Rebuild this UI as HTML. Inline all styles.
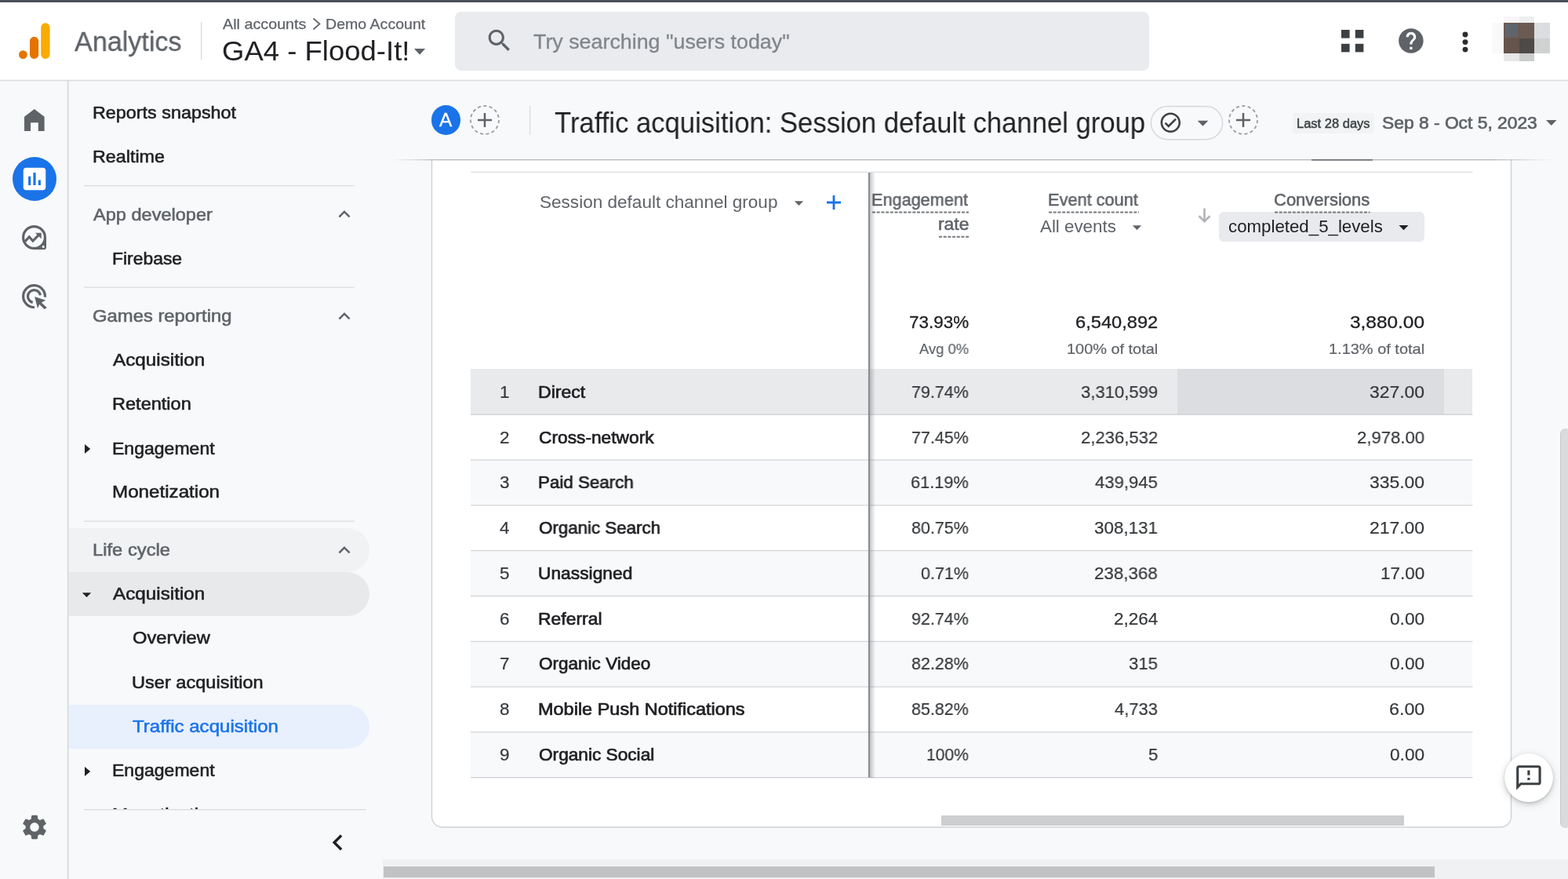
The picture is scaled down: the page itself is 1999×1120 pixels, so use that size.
<!DOCTYPE html>
<html lang="en">
<head>
<meta charset="utf-8">
<title>Analytics | Traffic acquisition: Session default channel group</title>
<meta name="viewport" content="width=1999">
<style>
*{box-sizing:border-box;margin:0;padding:0}
html,body{width:1999px;height:1120px;overflow:hidden;background:#f8f9fa}
body{position:relative;font-family:"Liberation Sans",sans-serif;color:#202124;-webkit-font-smoothing:antialiased}
.t{position:absolute;white-space:nowrap;transform-origin:0 0;display:block;will-change:transform}
.i{position:absolute;display:block;overflow:visible}
.b{position:absolute;display:block}
header,nav,main,section,aside,footer{position:absolute;display:block}
ul,li{list-style:none}
a{color:inherit;text-decoration:none}
h1{font-weight:400;font-size:inherit}
.g{position:absolute;left:0;top:0}
table{border-collapse:collapse}

</style>
</head>
<body>
<header style="left:0;top:0">
<div class="b" style="left:0.00px;top:0.00px;width:1999.00px;height:103.00px;background:#fff"></div>
<svg class="i" style="left:0.00px;top:100px" width="1999.00" height="4" viewBox="0 0 1999.00 4"><line x1="0" x2="1999.00" y1="2.40" y2="2.40" stroke="#d9dbdf" stroke-width="1.50" /></svg>
<div class="b" style="left:0.00px;top:0.00px;width:1999.00px;height:2.50px;background:#4a5058"></div>
<svg class="i" style="left:20.00px;top:26.00px" width="50.00" height="52.00" viewBox="0 0 50 52" ><rect x="32.2" y="3.3" width="11.4" height="45.7" rx="5.7" fill="#f9ab00"/><rect x="18" y="20.8" width="11.2" height="28.2" rx="5.6" fill="#e37400"/><circle cx="9.4" cy="43.6" r="5.4" fill="#e37400"/></svg>
<span class="t" style="left:95.00px;top:35px;font-size:35.5px;line-height:36px;color:#5f6368;transform:scaleX(0.9610);-webkit-text-stroke:0.35px #5f6368;">Analytics</span>
<svg class="i" style="left:254px;top:28.00px" width="4" height="48.50" viewBox="0 0 4 48.50"><line y1="0" y2="48.50" x1="2.70" x2="2.70" stroke="#dadce0" stroke-width="1.40"/></svg>
<span class="t" style="left:284.00px;top:21px;font-size:19.0px;line-height:19px;color:#5f6368;transform:scaleX(1.0393);-webkit-text-stroke:0.25px #5f6368;">All accounts</span>
<svg class="i" style="left:396.00px;top:21.00px" width="15.00" height="19.00" viewBox="0 0 15 19" ><path d="M3.5 2.5l8 7-8 7" fill="none" stroke="#5f6368" stroke-width="1.7"/></svg>
<span class="t" style="left:415.00px;top:21px;font-size:19.0px;line-height:19px;color:#5f6368;transform:scaleX(1.0299);-webkit-text-stroke:0.25px #5f6368;">Demo Account</span>
<span class="t" role="button" style="left:283.00px;top:47px;font-size:35.5px;line-height:36px;color:#202124;transform:scaleX(1.0286);">GA4 - Flood-It!</span>
<svg class="i" style="left:527.80px;top:62.00px" width="14.20" height="7.80" viewBox="0 0 14.2 7.8" ><path d="M0 0h14.2L7.1 7.8z" fill="#5f6368"/></svg>
<div class="b" style="left:580.00px;top:15.00px;width:885.00px;height:74.50px;background:#e9ebee;border-radius:8px"></div>
<svg class="i" style="left:617.60px;top:33.40px" width="37.40" height="37.40" viewBox="0 0 24 24" fill="#5f6368" ><path d="M15.5 14h-.79l-.28-.27C15.41 12.59 16 11.11 16 9.5 16 5.91 13.09 3 9.5 3S3 5.91 3 9.5 5.91 16 9.5 16c1.61 0 3.09-.59 4.23-1.57l.27.28v.79l5 4.99L20.49 19l-4.99-5zm-6 0C7.01 14 5 11.99 5 9.5S7.01 5 9.5 5 14 7.01 14 9.5 11.99 14 9.5 14z"/></svg>
<span class="t" style="left:680.00px;top:40px;font-size:26.0px;line-height:26px;color:#80868b;transform:scaleX(1.0318);-webkit-text-stroke:0.30px #80868b;">Try searching "users today"</span>
<svg class="i" style="left:1709.90px;top:38.10px" width="28.70" height="28.70" viewBox="0 0 28.7 28.7" ><rect x="0" y="0" width="10.6" height="10.6" fill="#3c4043"/><rect x="0" y="17.8" width="10.6" height="10.6" fill="#3c4043"/><rect x="17.8" y="0" width="10.6" height="10.6" fill="#3c4043"/><rect x="17.8" y="17.8" width="10.6" height="10.6" fill="#3c4043"/></svg>
<svg class="i" style="left:1780.10px;top:33.10px" width="37.80" height="37.80" viewBox="0 0 24 24" fill="#5f6368" ><path d="M12 2C6.48 2 2 6.48 2 12s4.48 10 10 10 10-4.48 10-10S17.52 2 12 2zm1 17h-2v-2h2v2zm2.07-7.75l-.9.92C13.45 12.9 13 13.5 13 15h-2v-.5c0-1.1.45-2.1 1.17-2.83l1.24-1.26c.37-.36.59-.86.59-1.41 0-1.1-.9-2-2-2s-2 .9-2 2H8c0-2.21 1.79-4 4-4s4 1.79 4 4c0 .88-.36 1.68-.93 2.25z"/></svg>
<svg class="i" style="left:1863.60px;top:40.30px" width="8.00" height="27.00" viewBox="0 0 8 27" fill="#2a2c30"><circle cx="4" cy="4" r="3.45"/><circle cx="4" cy="13.6" r="3.45"/><circle cx="4" cy="23.1" r="3.45"/></svg>
<div class="b" style="left:1902.00px;top:29.00px;width:15.00px;height:38.50px;background:#f9f9fa"></div>
<div class="b" style="left:1917.00px;top:21.00px;width:19.50px;height:8.00px;background:#f7f7f8"></div>
<div class="b" style="left:1936.50px;top:21.00px;width:19.50px;height:8.00px;background:#eeeeef"></div>
<div class="b" style="left:1917.00px;top:67.50px;width:19.50px;height:10.50px;background:#e7e7e8"></div>
<div class="b" style="left:1936.50px;top:67.50px;width:19.50px;height:10.50px;background:#cbcccc"></div>
<div class="b" style="left:1956.00px;top:29.00px;width:19.50px;height:19.50px;background:#dcdde0"></div>
<div class="b" style="left:1956.00px;top:48.50px;width:19.50px;height:19.00px;background:#d0d1d1"></div>
<div class="b" style="left:1917.00px;top:29.00px;width:19.50px;height:19.50px;background:#6a5a52"></div>
<div class="b" style="left:1918.50px;top:30.50px;width:16.50px;height:16.50px;background:#5f656c"></div>
<div class="b" style="left:1936.50px;top:29.00px;width:19.50px;height:19.50px;background:#6a5a52"></div>
<div class="b" style="left:1917.00px;top:48.50px;width:19.50px;height:19.00px;background:#64544c"></div>
<div class="b" style="left:1936.50px;top:48.50px;width:19.50px;height:19.00px;background:#4d4a47"></div>
</header>
<nav aria-label="Main" style="left:0;top:0">
<svg class="i" style="left:84px;top:103.00px" width="4" height="1017.00" viewBox="0 0 4 1017.00"><line y1="0" y2="1017.00" x1="2.70" x2="2.70" stroke="#d3d5d9" stroke-width="1.60"/></svg>
<svg class="i" style="left:31.00px;top:139.00px" width="25.60" height="28.00" viewBox="0 0 25.6 28" ><path d="M12.8 0L25.6 9.8V28H17.8V17.2H8V28H0V9.8z" fill="#5f6368"/></svg>
<div class="b" style="left:15.70px;top:200.00px;width:56.00px;height:56.00px;background:#1a73e8;border-radius:50%"></div>
<svg class="i" style="left:24.70px;top:209.00px" width="38.00" height="38.00" viewBox="0 0 24 24" fill="#fff" ><path d="M19 3H5c-1.1 0-2 .9-2 2v14c0 1.1.9 2 2 2h14c1.1 0 2-.9 2-2V5c0-1.1-.9-2-2-2zM9 17H7v-7h2v7zm4 0h-2V7h2v10zm4 0h-2v-4h2v4z"/></svg>
<svg class="i" style="left:28.35px;top:287.30px" width="31.00" height="31.00" viewBox="0 0 31 31" ><path fill-rule="evenodd" fill="#5f6368" d="M15.5 0A15.5 15.5 0 1 0 15.5 31H28.6a2.4 2.4 0 0 0 2.4-2.4V15.5A15.5 15.5 0 0 0 15.5 0zM15.5 3.2a12.3 12.3 0 1 1 0 24.6a12.3 12.3 0 1 1 0-24.6zM27.2 25.7a1.6 1.6 0 1 1 0 3.2a1.6 1.6 0 1 1 0-3.2z"/><path d="M3.9 20.6l5.4-5.8 4.6 5.2 7-7.2" fill="none" stroke="#5f6368" stroke-width="3.1"/><path d="M17 9.8h7.7v7.5z" fill="#5f6368"/></svg>
<svg class="i" style="left:28.35px;top:362.00px" width="33.00" height="33.00" viewBox="0 0 33 33" ><path d="M15.99 29.49A13.9 13.9 0 1 1 29.37 16.57" fill="none" stroke="#5f6368" stroke-width="3.2"/><path d="M13.70 23.39A8 8 0 1 1 23.38 14.21" fill="none" stroke="#5f6368" stroke-width="3.2"/><path d="M16.1 16.1l14.1 4.3-5.4 3.2 7 6.5-3.2 1.8-6.4-6.1-2.2 4.9z" fill="#5f6368"/></svg>
<svg class="i" style="left:24.70px;top:1035.20px" width="38.00" height="38.00" viewBox="0 0 24 24" fill="#5f6368" ><path d="M19.14 12.94c.04-.3.06-.61.06-.94 0-.32-.02-.64-.07-.94l2.03-1.58c.18-.14.23-.41.12-.61l-1.92-3.32c-.12-.22-.37-.29-.59-.22l-2.39.96c-.5-.38-1.03-.7-1.62-.94l-.36-2.54c-.04-.24-.24-.41-.48-.41h-3.84c-.24 0-.43.17-.47.41l-.36 2.54c-.59.24-1.13.57-1.62.94l-2.39-.96c-.22-.08-.47 0-.59.22L2.74 8.87c-.12.21-.08.47.12.61l2.03 1.58c-.05.3-.09.63-.09.94s.02.64.07.94l-2.03 1.58c-.18.14-.23.41-.12.61l1.92 3.32c.12.22.37.29.59.22l2.39-.96c.5.38 1.03.7 1.62.94l.36 2.54c.05.24.24.41.48.41h3.84c.24 0 .44-.17.47-.41l.36-2.54c.59-.24 1.13-.56 1.62-.94l2.39.96c.22.08.47 0 .59-.22l1.92-3.32c.12-.22.07-.47-.12-.61l-2.01-1.58zM12 15.6c-1.98 0-3.6-1.62-3.6-3.6s1.62-3.6 3.6-3.6 3.6 1.62 3.6 3.6-1.62 3.6-3.6 3.6z"/></svg>
</nav>
<nav aria-label="Reports" style="left:0;top:0">
<div class="b" style="left:87.50px;top:673.20px;width:383.50px;height:56.00px;background:#f1f2f4;border-radius:0 28px 28px 0"></div>
<div class="b" style="left:87.50px;top:729.30px;width:383.50px;height:56.00px;background:#e8e9eb;border-radius:0 28px 28px 0"></div>
<div class="b" style="left:87.50px;top:898.00px;width:383.50px;height:56.00px;background:#e8f0fe;border-radius:0 28px 28px 0"></div>
<a class="t" href="#" style="left:118.00px;top:133px;font-size:21.5px;line-height:22px;color:#202124;transform:scaleX(1.0862);-webkit-text-stroke:0.55px #202124;">Reports snapshot</a>
<a class="t" href="#" style="left:118.00px;top:189px;font-size:21.5px;line-height:22px;color:#202124;transform:scaleX(1.0840);-webkit-text-stroke:0.55px #202124;">Realtime</a>
<svg class="i" style="left:107.00px;top:234px" width="345.00" height="4" viewBox="0 0 345.00 4"><line x1="0" x2="345.00" y1="2.60" y2="2.60" stroke="#dadcdf" stroke-width="1.40" /></svg>
<span class="t" role="button" aria-expanded="true" style="left:119.00px;top:263px;font-size:21.5px;line-height:22px;color:#5f6368;transform:scaleX(1.0956);-webkit-text-stroke:0.55px #5f6368;">App developer</span>
<svg class="i" style="left:423.70px;top:258.00px" width="30.00" height="30.00" viewBox="0 0 24 24" fill="#5f6368" ><path d="M12 8l-6 6 1.41 1.41L12 10.83l4.59 4.58L18 14z"/></svg>
<a class="t" href="#" style="left:143.00px;top:319px;font-size:21.5px;line-height:22px;color:#202124;transform:scaleX(1.0650);-webkit-text-stroke:0.55px #202124;">Firebase</a>
<svg class="i" style="left:107.00px;top:364px" width="345.00" height="4" viewBox="0 0 345.00 4"><line x1="0" x2="345.00" y1="2.10" y2="2.10" stroke="#dadcdf" stroke-width="1.40" /></svg>
<span class="t" role="button" aria-expanded="true" style="left:118.00px;top:392px;font-size:21.5px;line-height:22px;color:#5f6368;transform:scaleX(1.1081);-webkit-text-stroke:0.55px #5f6368;">Games reporting</span>
<svg class="i" style="left:423.70px;top:387.50px" width="30.00" height="30.00" viewBox="0 0 24 24" fill="#5f6368" ><path d="M12 8l-6 6 1.41 1.41L12 10.83l4.59 4.58L18 14z"/></svg>
<a class="t" href="#" style="left:144.00px;top:448px;font-size:21.5px;line-height:22px;color:#202124;transform:scaleX(1.1288);-webkit-text-stroke:0.55px #202124;">Acquisition</a>
<a class="t" href="#" style="left:143.00px;top:504px;font-size:21.5px;line-height:22px;color:#202124;transform:scaleX(1.0947);-webkit-text-stroke:0.55px #202124;">Retention</a>
<svg class="i" style="left:107.60px;top:565.60px" width="7.20" height="12.00" viewBox="0 0 7.2 12" ><path d="M0 0l7.2 6L0 12z" fill="#202124"/></svg>
<a class="t" href="#" style="left:143.00px;top:561px;font-size:21.5px;line-height:22px;color:#202124;transform:scaleX(1.0712);-webkit-text-stroke:0.55px #202124;">Engagement</a>
<a class="t" href="#" style="left:143.00px;top:616px;font-size:21.5px;line-height:22px;color:#202124;transform:scaleX(1.1243);-webkit-text-stroke:0.55px #202124;">Monetization</a>
<svg class="i" style="left:107.00px;top:662px" width="345.00" height="4" viewBox="0 0 345.00 4"><line x1="0" x2="345.00" y1="2.10" y2="2.10" stroke="#dadcdf" stroke-width="1.40" /></svg>
<span class="t" role="button" aria-expanded="true" style="left:118.00px;top:690px;font-size:21.5px;line-height:22px;color:#5f6368;transform:scaleX(1.1044);-webkit-text-stroke:0.55px #5f6368;">Life cycle</span>
<svg class="i" style="left:423.70px;top:685.80px" width="30.00" height="30.00" viewBox="0 0 24 24" fill="#5f6368" ><path d="M12 8l-6 6 1.41 1.41L12 10.83l4.59 4.58L18 14z"/></svg>
<svg class="i" style="left:97.30px;top:744.20px" width="27.00" height="27.00" viewBox="0 0 24 24" fill="#202124" ><path d="M7 10l5 5 5-5z"/></svg>
<a class="t" href="#" style="left:144.00px;top:746px;font-size:21.5px;line-height:22px;color:#202124;transform:scaleX(1.1288);-webkit-text-stroke:0.55px #202124;">Acquisition</a>
<a class="t" href="#" style="left:169.00px;top:802px;font-size:21.5px;line-height:22px;color:#202124;transform:scaleX(1.1040);-webkit-text-stroke:0.55px #202124;">Overview</a>
<a class="t" href="#" style="left:168.00px;top:859px;font-size:21.5px;line-height:22px;color:#202124;transform:scaleX(1.0962);-webkit-text-stroke:0.55px #202124;">User acquisition</a>
<a class="t" href="#" aria-current="page" style="left:169.00px;top:915px;font-size:21.5px;line-height:22px;color:#1a73e8;transform:scaleX(1.1195);-webkit-text-stroke:0.55px #1a73e8;">Traffic acquisition</a>
<svg class="i" style="left:107.60px;top:976.60px" width="7.20" height="12.00" viewBox="0 0 7.2 12" ><path d="M0 0l7.2 6L0 12z" fill="#202124"/></svg>
<a class="t" href="#" style="left:143.00px;top:971px;font-size:21.5px;line-height:22px;color:#202124;transform:scaleX(1.0712);-webkit-text-stroke:0.55px #202124;">Engagement</a>
<div class="b" style="left:88px;top:1000px;width:390px;height:31px;overflow:hidden"><a class="t" href="#" style="left:55.00px;top:27px;font-size:21.5px;line-height:22px;color:#202124;transform:scaleX(1.1243);-webkit-text-stroke:0.55px #202124;">Monetization</a></div>
<svg class="i" style="left:107.00px;top:1029px" width="360.00" height="4" viewBox="0 0 360.00 4"><line x1="0" x2="360.00" y1="2.60" y2="2.60" stroke="#dadcdf" stroke-width="1.40" /></svg>
<svg class="i" style="left:410.00px;top:1053.10px" width="41.00" height="41.00" viewBox="0 0 24 24" fill="#202124" ><path d="M15.41 7.41L14 6l-6 6 6 6 1.41-1.41L10.83 12z"/></svg>
</nav>
<section aria-label="Report header" style="left:0;top:0">
<div class="b" style="left:550.00px;top:134.00px;width:37.00px;height:37.50px;background:#1a73e8;border-radius:50%"></div>
<span class="t" style="left:560.00px;top:141px;font-size:23.5px;line-height:24px;color:#fff;transform:scaleX(1.0391);-webkit-text-stroke:0.30px #fff;">A</span>
<svg class="i" style="left:599.30px;top:134.00px" width="38.00" height="38.00" viewBox="0 0 38 38" ><circle cx="19" cy="19" r="18" fill="none" stroke="#9aa0a6" stroke-width="1.8" stroke-dasharray="4.2 3.3"/><path d="M19 10v18M10 19h18" stroke="#5f6368" stroke-width="2.5" fill="none"/></svg>
<svg class="i" style="left:673px;top:135.00px" width="4" height="37.00" viewBox="0 0 4 37.00"><line y1="0" y2="37.00" x1="2.60" x2="2.60" stroke="#dadce0" stroke-width="1.40"/></svg>
<h1 class="t" style="left:707.00px;top:139px;font-size:36.5px;line-height:36px;color:#202124;transform:scaleX(0.9493);">Traffic acquisition: Session default channel group</h1>
<svg class="i" style="left:1466.00px;top:133.50px" width="94.00" height="45.00" viewBox="0 0 94 45" ><rect x="1.4" y="1.5" width="91.2" height="42.2" rx="21.1" fill="none" stroke="#d6d8dc" stroke-width="1.5"/></svg>
<svg class="i" style="left:1477.40px;top:141.00px" width="30.60" height="30.60" viewBox="0 0 24 24" fill="#3c4043" ><path d="M12 2C6.48 2 2 6.48 2 12s4.48 10 10 10 10-4.48 10-10S17.52 2 12 2zm0 18c-4.41 0-8-3.59-8-8s3.59-8 8-8 8 3.59 8 8-3.59 8-8 8zm4.59-12.42L10 14.17l-2.59-2.58L6 13l4 4 8-8z"/></svg>
<svg class="i" style="left:1516.90px;top:139.50px" width="33.00" height="33.00" viewBox="0 0 24 24" fill="#5f6368" ><path d="M7 10l5 5 5-5z"/></svg>
<svg class="i" style="left:1566.00px;top:134.00px" width="38.00" height="38.00" viewBox="0 0 38 38" ><circle cx="19" cy="19" r="18" fill="none" stroke="#9aa0a6" stroke-width="1.8" stroke-dasharray="4.2 3.3"/><path d="M19 10v18M10 19h18" stroke="#5f6368" stroke-width="2.5" fill="none"/></svg>
<div class="b" style="left:1647.70px;top:144.00px;width:104.60px;height:25.50px;background:#f1f3f4;border-radius:3px"></div>
<span class="t" style="left:1653.00px;top:150px;font-size:16.0px;line-height:16px;color:#3c4043;transform:scaleX(1.0320);-webkit-text-stroke:0.45px #3c4043;">Last 28 days</span>
<span class="t" style="left:1762.00px;top:146px;font-size:22.0px;line-height:22px;color:#5f6368;transform:scaleX(1.0368);-webkit-text-stroke:0.70px #5f6368;">Sep 8 - Oct 5, 2023</span>
<svg class="i" style="left:1971.00px;top:152.50px" width="13.50" height="7.00" viewBox="0 0 13.5 7" ><path d="M0 0h13.5L6.75 7z" fill="#5f6368"/></svg>
</section>
<main style="left:0;top:0" role="table" aria-label="Traffic acquisition">
<div class="b" style="left:550.00px;top:203.00px;width:1377.00px;height:852.00px;background:#fff;border-radius:0 0 14px 14px"></div>
<svg class="i" style="left:548.00px;top:203.00px" width="1381.00" height="854.00" viewBox="0 0 1381 854" ><path d="M2.5 0V837.5a13.5 13.5 0 0 0 13.5 13.5H1365a13.5 13.5 0 0 0 13.5-13.5V0" fill="none" stroke="#cfd1d5" stroke-width="1.4"/></svg>
<div class="b" style="left:500.00px;top:203.00px;width:1480.00px;height:1.00px;background:linear-gradient(90deg,rgba(128,134,139,0) 0,rgba(128,134,139,.6) 60px,rgba(128,134,139,.6) 1400px,rgba(128,134,139,0) 100%)"></div>
<div class="b" style="left:500.00px;top:204.00px;width:1480.00px;height:1.00px;background:linear-gradient(90deg,rgba(128,134,139,0) 0,rgba(128,134,139,.18) 60px,rgba(128,134,139,.18) 1400px,rgba(128,134,139,0) 100%)"></div>
<svg class="i" style="left:1672.00px;top:201px" width="78.00" height="4" viewBox="0 0 78.00 4"><line x1="0" x2="78.00" y1="2.80" y2="2.80" stroke="#5f6368" stroke-width="1.60" /></svg>
<div class="b" style="left:599.50px;top:470.44px;width:1277.50px;height:57.81px;background:#e9eaec"></div>
<div class="b" style="left:1500.70px;top:470.44px;width:340.00px;height:57.81px;background:#dcdde0"></div>
<div class="b" style="left:599.50px;top:586.06px;width:1277.50px;height:57.81px;background:#f8f9fa"></div>
<div class="b" style="left:599.50px;top:701.68px;width:1277.50px;height:57.81px;background:#f8f9fa"></div>
<div class="b" style="left:599.50px;top:817.30px;width:1277.50px;height:57.81px;background:#f8f9fa"></div>
<div class="b" style="left:599.50px;top:932.92px;width:1277.50px;height:57.81px;background:#f8f9fa"></div>
<svg class="i" style="left:599.50px;top:217px" width="1277.50" height="4" viewBox="0 0 1277.50 4"><line x1="0" x2="1277.50" y1="2.40" y2="2.40" stroke="#dcdee1" stroke-width="1.40" /></svg>
<svg class="i" style="left:599.50px;top:526px" width="1277.50" height="4" viewBox="0 0 1277.50 4"><line x1="0" x2="1277.50" y1="2.25" y2="2.25" stroke="#d3d5d9" stroke-width="1.30" /></svg>
<svg class="i" style="left:599.50px;top:584px" width="1277.50" height="4" viewBox="0 0 1277.50 4"><line x1="0" x2="1277.50" y1="2.06" y2="2.06" stroke="#d3d5d9" stroke-width="1.30" /></svg>
<svg class="i" style="left:599.50px;top:641px" width="1277.50" height="4" viewBox="0 0 1277.50 4"><line x1="0" x2="1277.50" y1="2.87" y2="2.87" stroke="#d3d5d9" stroke-width="1.30" /></svg>
<svg class="i" style="left:599.50px;top:699px" width="1277.50" height="4" viewBox="0 0 1277.50 4"><line x1="0" x2="1277.50" y1="2.68" y2="2.68" stroke="#d3d5d9" stroke-width="1.30" /></svg>
<svg class="i" style="left:599.50px;top:757px" width="1277.50" height="4" viewBox="0 0 1277.50 4"><line x1="0" x2="1277.50" y1="2.49" y2="2.49" stroke="#d3d5d9" stroke-width="1.30" /></svg>
<svg class="i" style="left:599.50px;top:815px" width="1277.50" height="4" viewBox="0 0 1277.50 4"><line x1="0" x2="1277.50" y1="2.30" y2="2.30" stroke="#d3d5d9" stroke-width="1.30" /></svg>
<svg class="i" style="left:599.50px;top:873px" width="1277.50" height="4" viewBox="0 0 1277.50 4"><line x1="0" x2="1277.50" y1="2.11" y2="2.11" stroke="#d3d5d9" stroke-width="1.30" /></svg>
<svg class="i" style="left:599.50px;top:930px" width="1277.50" height="4" viewBox="0 0 1277.50 4"><line x1="0" x2="1277.50" y1="2.92" y2="2.92" stroke="#d3d5d9" stroke-width="1.30" /></svg>
<svg class="i" style="left:599.50px;top:988px" width="1277.50" height="4" viewBox="0 0 1277.50 4"><line x1="0" x2="1277.50" y1="2.73" y2="2.73" stroke="#d3d5d9" stroke-width="1.30" /></svg>
<span class="t" role="columnheader" style="left:688.00px;top:247px;font-size:22.0px;line-height:22px;color:#5f6368;transform:scaleX(1.0252);">Session default channel group</span>
<svg class="i" style="left:1004.70px;top:245.00px" width="27.00" height="27.00" viewBox="0 0 24 24" fill="#5f6368" ><path d="M7 10l5 5 5-5z"/></svg>
<svg class="i" style="left:1053.70px;top:248.50px" width="18.00" height="18.00" viewBox="0 0 18 18" ><path d="M9 0v18M0 9h18" stroke="#1a73e8" stroke-width="2.8" fill="none"/></svg>
<span class="t" role="columnheader" style="left:1111.00px;top:244px;font-size:22.0px;line-height:22px;color:#5f6368;transform:scaleX(0.9851);-webkit-text-stroke:0.55px #5f6368;">Engagement</span>
<svg class="i" style="left:1112.00px;top:268px" width="123.00" height="4" viewBox="0 0 123.00 4"><line x1="0" x2="123.00" y1="2.50" y2="2.50" stroke="#74787d" stroke-width="1.90" stroke-dasharray="4 1.7"/></svg>
<span class="t" role="columnheader" style="left:1196.00px;top:275px;font-size:22.0px;line-height:22px;color:#5f6368;transform:scaleX(1.0391);-webkit-text-stroke:0.55px #5f6368;">rate</span>
<svg class="i" style="left:1196.50px;top:299px" width="38.50" height="4" viewBox="0 0 38.50 4"><line x1="0" x2="38.50" y1="2.70" y2="2.70" stroke="#74787d" stroke-width="1.90" stroke-dasharray="4 1.7"/></svg>
<span class="t" role="columnheader" style="left:1336.00px;top:244px;font-size:22.0px;line-height:22px;color:#5f6368;transform:scaleX(0.9892);-webkit-text-stroke:0.55px #5f6368;">Event count</span>
<svg class="i" style="left:1337.00px;top:268px" width="115.00" height="4" viewBox="0 0 115.00 4"><line x1="0" x2="115.00" y1="2.50" y2="2.50" stroke="#74787d" stroke-width="1.90" stroke-dasharray="4 1.7"/></svg>
<span class="t" style="left:1326.00px;top:278px;font-size:22.0px;line-height:22px;color:#5f6368;transform:scaleX(1.0152);">All events</span>
<svg class="i" style="left:1435.90px;top:276.10px" width="27.00" height="27.00" viewBox="0 0 24 24" fill="#5f6368" ><path d="M7 10l5 5 5-5z"/></svg>
<svg class="i" style="left:1526.50px;top:264.80px" width="17.00" height="19.00" viewBox="0 0 17 19" ><path d="M8.5 0.5v16.5M1.6 10.2l6.9 7 6.9-7" fill="none" stroke="#b3b5b9" stroke-width="2.7"/></svg>
<div class="b" style="left:1554.00px;top:270.00px;width:262.00px;height:37.80px;background:#e8eaed;border-radius:6px"></div>
<span class="t" role="columnheader" style="left:1624.00px;top:244px;font-size:22.0px;line-height:22px;color:#5f6368;transform:scaleX(0.9963);-webkit-text-stroke:0.55px #5f6368;">Conversions</span>
<svg class="i" style="left:1624.50px;top:268px" width="121.50" height="4" viewBox="0 0 121.50 4"><line x1="0" x2="121.50" y1="2.50" y2="2.50" stroke="#74787d" stroke-width="1.90" stroke-dasharray="4 1.7"/></svg>
<span class="t" style="left:1566.00px;top:278px;font-size:22.0px;line-height:22px;color:#202124;transform:scaleX(1.0122);">completed_5_levels</span>
<svg class="i" style="left:1774.90px;top:275.10px" width="29.00" height="29.00" viewBox="0 0 24 24" fill="#202124" ><path d="M7 10l5 5 5-5z"/></svg>
<span class="t" style="left:1159.00px;top:400px;font-size:22.0px;line-height:22px;color:#202124;transform:scaleX(1.0209);-webkit-text-stroke:0.30px #202124;">73.93%</span>
<span class="t" style="left:1371.00px;top:400px;font-size:22.0px;line-height:22px;color:#202124;transform:scaleX(1.0751);-webkit-text-stroke:0.30px #202124;">6,540,892</span>
<span class="t" style="left:1721.00px;top:400px;font-size:22.0px;line-height:22px;color:#202124;transform:scaleX(1.1095);-webkit-text-stroke:0.30px #202124;">3,880.00</span>
<span class="t" style="left:1172.00px;top:436px;font-size:18.5px;line-height:18px;color:#5f6368;transform:scaleX(0.9936);-webkit-text-stroke:0.20px #5f6368;">Avg 0%</span>
<span class="t" style="left:1360.00px;top:436px;font-size:18.5px;line-height:18px;color:#5f6368;transform:scaleX(1.0762);-webkit-text-stroke:0.20px #5f6368;">100% of total</span>
<span class="t" style="left:1694.00px;top:436px;font-size:18.5px;line-height:18px;color:#5f6368;transform:scaleX(1.0792);-webkit-text-stroke:0.20px #5f6368;">1.13% of total</span>
<div class="g" role="row">
<span class="t" style="left:637.00px;top:489px;font-size:22.5px;line-height:22px;color:#34373a;transform:scaleX(1.0000);-webkit-text-stroke:0.20px #34373a;">1</span>
<span class="t" style="left:686.00px;top:489px;font-size:22.5px;line-height:22px;color:#202124;transform:scaleX(1.0256);-webkit-text-stroke:0.70px #202124;">Direct</span>
<span class="t" style="left:1162.00px;top:489px;font-size:22.5px;line-height:22px;color:#34373a;transform:scaleX(0.9542);-webkit-text-stroke:0.20px #34373a;">79.74%</span>
<span class="t" style="left:1378.00px;top:489px;font-size:22.5px;line-height:22px;color:#34373a;transform:scaleX(0.9814);-webkit-text-stroke:0.20px #34373a;">3,310,599</span>
<span class="t" style="left:1746.00px;top:489px;font-size:22.5px;line-height:22px;color:#34373a;transform:scaleX(1.0189);-webkit-text-stroke:0.20px #34373a;">327.00</span>
</div>
<div class="g" role="row">
<span class="t" style="left:637.00px;top:547px;font-size:22.5px;line-height:22px;color:#34373a;transform:scaleX(1.0000);-webkit-text-stroke:0.20px #34373a;">2</span>
<span class="t" style="left:687.00px;top:547px;font-size:22.5px;line-height:22px;color:#202124;transform:scaleX(1.0109);-webkit-text-stroke:0.70px #202124;">Cross-network</span>
<span class="t" style="left:1162.00px;top:547px;font-size:22.5px;line-height:22px;color:#34373a;transform:scaleX(0.9542);-webkit-text-stroke:0.20px #34373a;">77.45%</span>
<span class="t" style="left:1378.00px;top:547px;font-size:22.5px;line-height:22px;color:#34373a;transform:scaleX(0.9821);-webkit-text-stroke:0.20px #34373a;">2,236,532</span>
<span class="t" style="left:1730.00px;top:547px;font-size:22.5px;line-height:22px;color:#34373a;transform:scaleX(0.9833);-webkit-text-stroke:0.20px #34373a;">2,978.00</span>
</div>
<div class="g" role="row">
<span class="t" style="left:637.00px;top:604px;font-size:22.5px;line-height:22px;color:#34373a;transform:scaleX(1.0000);-webkit-text-stroke:0.20px #34373a;">3</span>
<span class="t" style="left:686.00px;top:604px;font-size:22.5px;line-height:22px;color:#202124;transform:scaleX(0.9940);-webkit-text-stroke:0.70px #202124;">Paid Search</span>
<span class="t" style="left:1161.00px;top:604px;font-size:22.5px;line-height:22px;color:#34373a;transform:scaleX(0.9674);-webkit-text-stroke:0.20px #34373a;">61.19%</span>
<span class="t" style="left:1396.00px;top:604px;font-size:22.5px;line-height:22px;color:#34373a;transform:scaleX(0.9825);-webkit-text-stroke:0.20px #34373a;">439,945</span>
<span class="t" style="left:1746.00px;top:604px;font-size:22.5px;line-height:22px;color:#34373a;transform:scaleX(1.0189);-webkit-text-stroke:0.20px #34373a;">335.00</span>
</div>
<div class="g" role="row">
<span class="t" style="left:637.00px;top:662px;font-size:22.5px;line-height:22px;color:#34373a;transform:scaleX(1.0000);-webkit-text-stroke:0.20px #34373a;">4</span>
<span class="t" style="left:687.00px;top:662px;font-size:22.5px;line-height:22px;color:#202124;transform:scaleX(0.9920);-webkit-text-stroke:0.70px #202124;">Organic Search</span>
<span class="t" style="left:1162.00px;top:662px;font-size:22.5px;line-height:22px;color:#34373a;transform:scaleX(0.9545);-webkit-text-stroke:0.20px #34373a;">80.75%</span>
<span class="t" style="left:1395.00px;top:662px;font-size:22.5px;line-height:22px;color:#34373a;transform:scaleX(0.9962);-webkit-text-stroke:0.20px #34373a;">308,131</span>
<span class="t" style="left:1746.00px;top:662px;font-size:22.5px;line-height:22px;color:#34373a;transform:scaleX(1.0189);-webkit-text-stroke:0.20px #34373a;">217.00</span>
</div>
<div class="g" role="row">
<span class="t" style="left:637.00px;top:720px;font-size:22.5px;line-height:22px;color:#34373a;transform:scaleX(1.0000);-webkit-text-stroke:0.20px #34373a;">5</span>
<span class="t" style="left:686.00px;top:720px;font-size:22.5px;line-height:22px;color:#202124;transform:scaleX(1.0126);-webkit-text-stroke:0.70px #202124;">Unassigned</span>
<span class="t" style="left:1174.00px;top:720px;font-size:22.5px;line-height:22px;color:#34373a;transform:scaleX(0.9575);-webkit-text-stroke:0.20px #34373a;">0.71%</span>
<span class="t" style="left:1395.00px;top:720px;font-size:22.5px;line-height:22px;color:#34373a;transform:scaleX(0.9933);-webkit-text-stroke:0.20px #34373a;">238,368</span>
<span class="t" style="left:1760.00px;top:720px;font-size:22.5px;line-height:22px;color:#34373a;transform:scaleX(0.9964);-webkit-text-stroke:0.20px #34373a;">17.00</span>
</div>
<div class="g" role="row">
<span class="t" style="left:637.00px;top:778px;font-size:22.5px;line-height:22px;color:#34373a;transform:scaleX(1.0000);-webkit-text-stroke:0.20px #34373a;">6</span>
<span class="t" style="left:686.00px;top:778px;font-size:22.5px;line-height:22px;color:#202124;transform:scaleX(1.0181);-webkit-text-stroke:0.70px #202124;">Referral</span>
<span class="t" style="left:1162.00px;top:778px;font-size:22.5px;line-height:22px;color:#34373a;transform:scaleX(0.9542);-webkit-text-stroke:0.20px #34373a;">92.74%</span>
<span class="t" style="left:1420.00px;top:778px;font-size:22.5px;line-height:22px;color:#34373a;transform:scaleX(0.9926);-webkit-text-stroke:0.20px #34373a;">2,264</span>
<span class="t" style="left:1772.00px;top:778px;font-size:22.5px;line-height:22px;color:#34373a;transform:scaleX(1.0072);-webkit-text-stroke:0.20px #34373a;">0.00</span>
</div>
<div class="g" role="row">
<span class="t" style="left:637.00px;top:835px;font-size:22.5px;line-height:22px;color:#34373a;transform:scaleX(1.0000);-webkit-text-stroke:0.20px #34373a;">7</span>
<span class="t" style="left:687.00px;top:835px;font-size:22.5px;line-height:22px;color:#202124;transform:scaleX(1.0011);-webkit-text-stroke:0.70px #202124;">Organic Video</span>
<span class="t" style="left:1162.00px;top:835px;font-size:22.5px;line-height:22px;color:#34373a;transform:scaleX(0.9545);-webkit-text-stroke:0.20px #34373a;">82.28%</span>
<span class="t" style="left:1439.00px;top:835px;font-size:22.5px;line-height:22px;color:#34373a;transform:scaleX(0.9850);-webkit-text-stroke:0.20px #34373a;">315</span>
<span class="t" style="left:1772.00px;top:835px;font-size:22.5px;line-height:22px;color:#34373a;transform:scaleX(1.0072);-webkit-text-stroke:0.20px #34373a;">0.00</span>
</div>
<div class="g" role="row">
<span class="t" style="left:637.00px;top:893px;font-size:22.5px;line-height:22px;color:#34373a;transform:scaleX(1.0000);-webkit-text-stroke:0.20px #34373a;">8</span>
<span class="t" style="left:686.00px;top:893px;font-size:22.5px;line-height:22px;color:#202124;transform:scaleX(1.0435);-webkit-text-stroke:0.70px #202124;">Mobile Push Notifications</span>
<span class="t" style="left:1162.00px;top:893px;font-size:22.5px;line-height:22px;color:#34373a;transform:scaleX(0.9545);-webkit-text-stroke:0.20px #34373a;">85.82%</span>
<span class="t" style="left:1421.00px;top:893px;font-size:22.5px;line-height:22px;color:#34373a;transform:scaleX(0.9755);-webkit-text-stroke:0.20px #34373a;">4,733</span>
<span class="t" style="left:1771.00px;top:893px;font-size:22.5px;line-height:22px;color:#34373a;transform:scaleX(1.0337);-webkit-text-stroke:0.20px #34373a;">6.00</span>
</div>
<div class="g" role="row">
<span class="t" style="left:637.00px;top:951px;font-size:22.5px;line-height:22px;color:#34373a;transform:scaleX(1.0000);-webkit-text-stroke:0.20px #34373a;">9</span>
<span class="t" style="left:687.00px;top:951px;font-size:22.5px;line-height:22px;color:#202124;transform:scaleX(1.0066);-webkit-text-stroke:0.70px #202124;">Organic Social</span>
<span class="t" style="left:1181.00px;top:951px;font-size:22.5px;line-height:22px;color:#34373a;transform:scaleX(0.9366);-webkit-text-stroke:0.20px #34373a;">100%</span>
<span class="t" style="left:1464.00px;top:951px;font-size:22.5px;line-height:22px;color:#34373a;transform:scaleX(0.9850);-webkit-text-stroke:0.20px #34373a;">5</span>
<span class="t" style="left:1772.00px;top:951px;font-size:22.5px;line-height:22px;color:#34373a;transform:scaleX(1.0072);-webkit-text-stroke:0.20px #34373a;">0.00</span>
</div>
<div class="b" style="left:1109.50px;top:220.00px;width:6.00px;height:770.70px;background:linear-gradient(90deg,rgba(60,64,67,.25),rgba(60,64,67,0))"></div>
<svg class="i" style="left:1106px;top:220.00px" width="4" height="770.70" viewBox="0 0 4 770.70"><line y1="0" y2="770.70" x1="2.20" x2="2.20" stroke="#8a8d93" stroke-width="2.60"/></svg>
<div class="b" style="left:1200.00px;top:1038.70px;width:590.30px;height:13.50px;background:#cdcecf"></div>
</main>
<aside style="left:0;top:0">
<div class="b" style="left:488.00px;top:1095.00px;width:1511.00px;height:25.00px;background:#f0f1f2"></div>
<div class="b" style="left:488.70px;top:1104.00px;width:1340.30px;height:14.00px;background:#c1c2c3"></div>
<div class="b" style="left:1989px;top:546px;width:10px;height:509px;overflow:hidden"><div class="b" style="left:0;top:0;width:14px;height:508.5px;background:#dadbdd;border-radius:7px;border-left:1.5px solid #c6c8ca"></div></div>
<div class="b" style="left:1917.70px;top:960.00px;width:62.00px;height:62.00px;background:#fff;border-radius:50%;box-shadow:0 3px 8px rgba(60,64,67,.26),0 1px 3px rgba(60,64,67,.22)"></div>
<svg class="i" style="left:1929.80px;top:972.10px" width="37.80" height="37.80" viewBox="0 0 24 24" fill="#3c4043" ><path d="M20 2H4c-1.1 0-1.99.9-1.99 2L2 22l4-4h14c1.1 0 2-.9 2-2V4c0-1.1-.9-2-2-2zm0 14H5.17l-.59.59-.58.58V4h16v12zm-9-4h2v2h-2zm0-6h2v4h-2z"/></svg>
</aside>
</body>
</html>
